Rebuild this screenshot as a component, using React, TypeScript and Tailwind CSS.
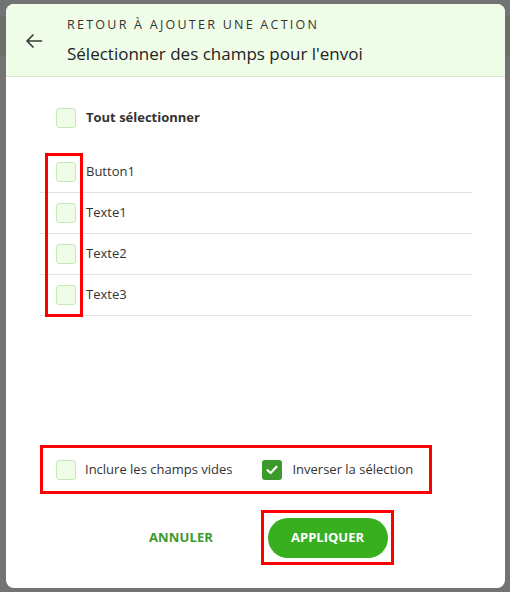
import React from "react";

const Box = ({ checked = false }: { checked?: boolean }) =>
  checked ? (
    <span className="flex h-5 w-5 shrink-0 items-center justify-center rounded-[3px] bg-[#3c9a2a]">
      <svg width="12" height="10" viewBox="0 0 12 10" fill="none">
        <path d="M1.5 5.2 L4.6 8 L10.5 1.8" stroke="white" strokeWidth="2.2" strokeLinecap="round" strokeLinejoin="round" />
      </svg>
    </span>
  ) : (
    <span className="block h-5 w-5 shrink-0 rounded-[3px] border border-[#c4ebb6] bg-[#eefce8]" />
  );

export default function App() {
  const items = ["Button1", "Texte1", "Texte2", "Texte3"];
  return (
    <div
      className="relative h-[592px] w-[510px] overflow-hidden bg-[#737373] text-[#333]"
      style={{ fontFamily: '"Open Sans", "Noto Sans", sans-serif' }}
    >
      <div className="absolute left-0 right-0 top-[16px] h-[40px] border-y border-[#6a6a6a] bg-[#6b6e69]" />
      <div className="absolute left-[6px] top-[4px] flex h-[584px] w-[499px] flex-col overflow-hidden rounded-[8px] bg-white">
        <div className="flex h-[73px] shrink-0 items-center border-b border-[#d3e6c9] bg-[#eefce8]">
          <div className="flex w-[61px] justify-start pl-[19px] pt-[2px]">
            <svg width="18" height="18" viewBox="0 0 18 18" fill="none">
              <path d="M16.5 9 H2 M8 3 L2 9 L8 15" stroke="#3a3a3a" strokeWidth="1.7" strokeLinecap="round" strokeLinejoin="round" />
            </svg>
          </div>
          <div className="flex flex-col">
            <div className="text-[12.5px] leading-[18px] tracking-[0.18em] text-[#333]">RETOUR À AJOUTER UNE ACTION</div>
            <div className="mt-[9px] text-[17px] leading-[22px] text-[#222]">Sélectionner des champs pour l'envoi</div>
          </div>
        </div>
        <div className="flex flex-1 flex-col pl-[34px] pr-[33px]">
          <div className="mt-[31px] flex items-center gap-[10px] pl-[16px]">
            <Box />
            <span className="text-[13px] font-bold text-[#333]">Tout sélectionner</span>
          </div>
          <div className="relative mt-[24px] flex flex-col">
            <div className="pointer-events-none absolute left-[5px] top-[1px] h-[164px] w-[38px] border-[3px] border-[#ff0000]" />
            {items.map((t) => (
              <div key={t} className="flex h-[41px] items-center gap-[10px] border-b border-[#e3e3e3] pl-[16px]">
                <Box />
                <span className="text-[13px] text-[#333]">{t}</span>
              </div>
            ))}
          </div>
          <div className="flex-1" />
          <div className="ml-0 flex h-[49px] w-[392px] items-center border-[3px] border-[#ff0000] pl-[13px]">
            <div className="flex items-center gap-[9px]">
              <Box />
              <span className="text-[13px] text-[#333]">Inclure les champs vides</span>
            </div>
            <div className="ml-[30px] flex items-center gap-[10px]">
              <Box checked />
              <span className="text-[13px] text-[#333]">Inverser la sélection</span>
            </div>
          </div>
          <div className="mb-[23px] mt-[16px] flex items-center">
            <button className="ml-[109px] text-[13px] font-bold tracking-[0.01em] text-[#3c9a2a]">ANNULER</button>
            <div className="ml-[48px] flex h-[55px] w-[133px] items-center justify-center border-[3px] border-[#ff0000]">
              <div className="flex h-[40px] w-[120px] items-center justify-center rounded-full bg-[#37af1f] text-[13px] font-bold text-white">
                APPLIQUER
              </div>
            </div>
          </div>
        </div>
      </div>
    </div>
  );
}
